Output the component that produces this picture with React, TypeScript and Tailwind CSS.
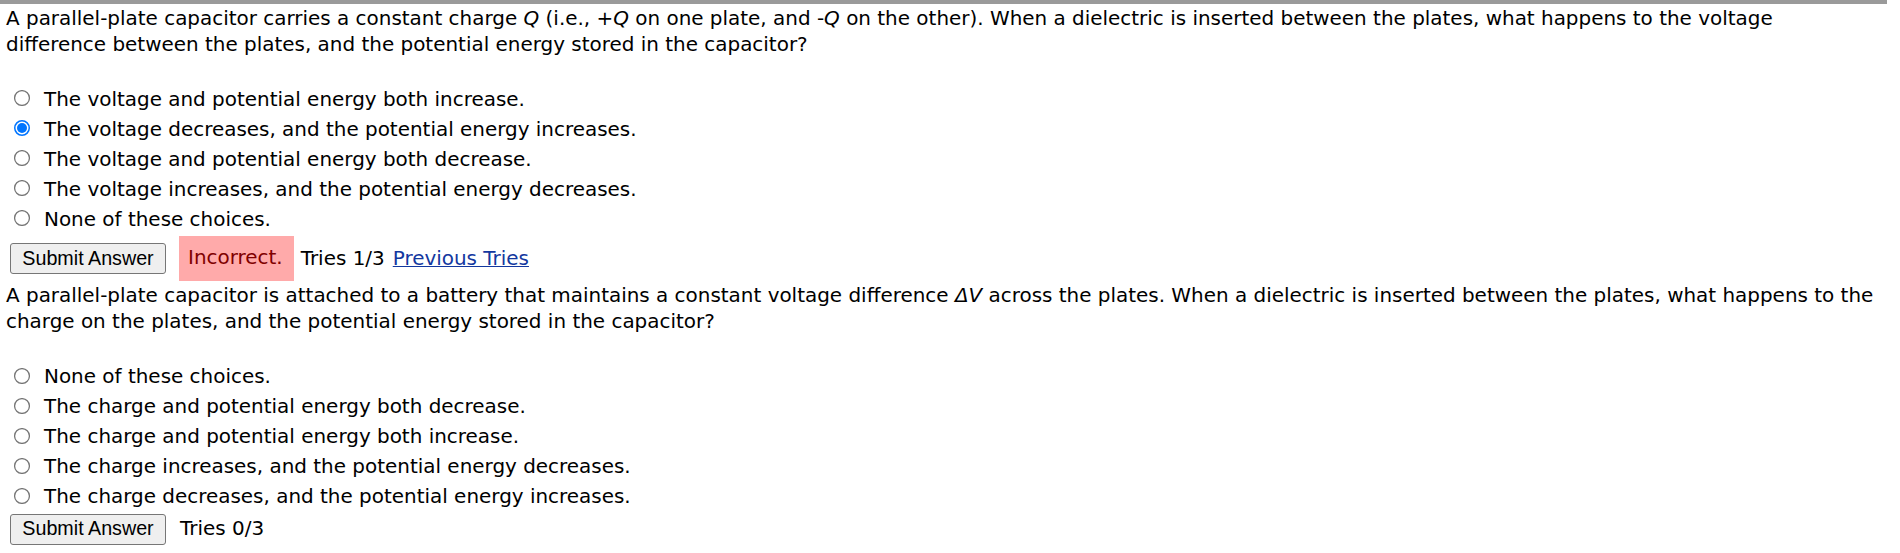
import React from "react";

function Radio({ checked }: { checked?: boolean }) {
  if (checked) {
    return (
      <svg width="16" height="16" viewBox="0 0 16 16" className="shrink-0 -mt-[2px]">
        <circle cx="8" cy="8" r="7.25" fill="#fff" stroke="#0075ff" strokeWidth="1.5" />
        <circle cx="8" cy="8" r="5" fill="#0075ff" />
      </svg>
    );
  }
  return (
    <svg width="16" height="16" viewBox="0 0 16 16" className="shrink-0 -mt-[2px]">
      <circle cx="8" cy="8" r="7.4" fill="#fff" stroke="#767676" strokeWidth="1.25" />
    </svg>
  );
}

function Option({ text, checked }: { text: string; checked?: boolean }) {
  return (
    <div className="h-[30px] flex items-center pl-[14px] gap-[14px] whitespace-nowrap">
      <Radio checked={checked} />
      <span>{text}</span>
    </div>
  );
}

function SubmitButton() {
  return (
    <button className="w-[156px] h-[31px] shrink-0 rounded-[3px] border border-[#767676] bg-[#efefef] text-black font-['Liberation_Sans',Arial,sans-serif] text-[19.7px] leading-none flex items-center justify-center">
      Submit Answer
    </button>
  );
}

export default function App() {
  const q1opts = [
    "The voltage and potential energy both increase.",
    "The voltage decreases, and the potential energy increases.",
    "The voltage and potential energy both decrease.",
    "The voltage increases, and the potential energy decreases.",
    "None of these choices.",
  ];
  const q2opts = [
    "None of these choices.",
    "The charge and potential energy both decrease.",
    "The charge and potential energy both increase.",
    "The charge increases, and the potential energy decreases.",
    "The charge decreases, and the potential energy increases.",
  ];
  return (
    <div className="bg-white text-black font-['DejaVu_Sans',Verdana,sans-serif] text-[19.96px] leading-[25.7px] min-h-[553px] w-[1900px]">
      <div className="h-[4px] w-[1887px] bg-[#9a9a9a]" />

      <div className="pl-[6px] pt-[2px] whitespace-nowrap">
        A parallel-plate capacitor carries a constant charge <i>Q</i> (i.e., +<i>Q</i> on one plate, and -<i>Q</i> on the other). When a dielectric is inserted between the plates, what happens to the voltage
        <br />
        difference between the plates, and the potential energy stored in the capacitor?
      </div>
      <div className="mt-[27px] flex flex-col">
        {q1opts.map((t, i) => (
          <Option key={i} text={t} checked={i === 1} />
        ))}
      </div>
      <div className="mt-[2px] flex items-center pl-[10px] whitespace-nowrap">
        <SubmitButton />
        <span className="ml-[13px] bg-[#ffaaaa] text-[#800000] pt-[9px] pb-[10px] pl-[9px] pr-[11px]">Incorrect.</span>
        <span className="ml-[7px]">Tries 1/3</span>
        <a href="#" className="ml-[8px] text-[#13389f] underline">Previous Tries</a>
      </div>

      <div className="mt-[2px] pl-[6px] whitespace-nowrap">
        A parallel-plate capacitor is attached to a battery that maintains a constant voltage difference <i>ΔV</i> across the plates. When a dielectric is inserted between the plates, what happens to the
        <br />
        charge on the plates, and the potential energy stored in the capacitor?
      </div>
      <div className="mt-[27px] flex flex-col">
        {q2opts.map((t, i) => (
          <Option key={i} text={t} />
        ))}
      </div>
      <div className="mt-[2px] flex items-center pl-[10px] whitespace-nowrap">
        <SubmitButton />
        <span className="ml-[14px]">Tries 0/3</span>
      </div>
    </div>
  );
}
